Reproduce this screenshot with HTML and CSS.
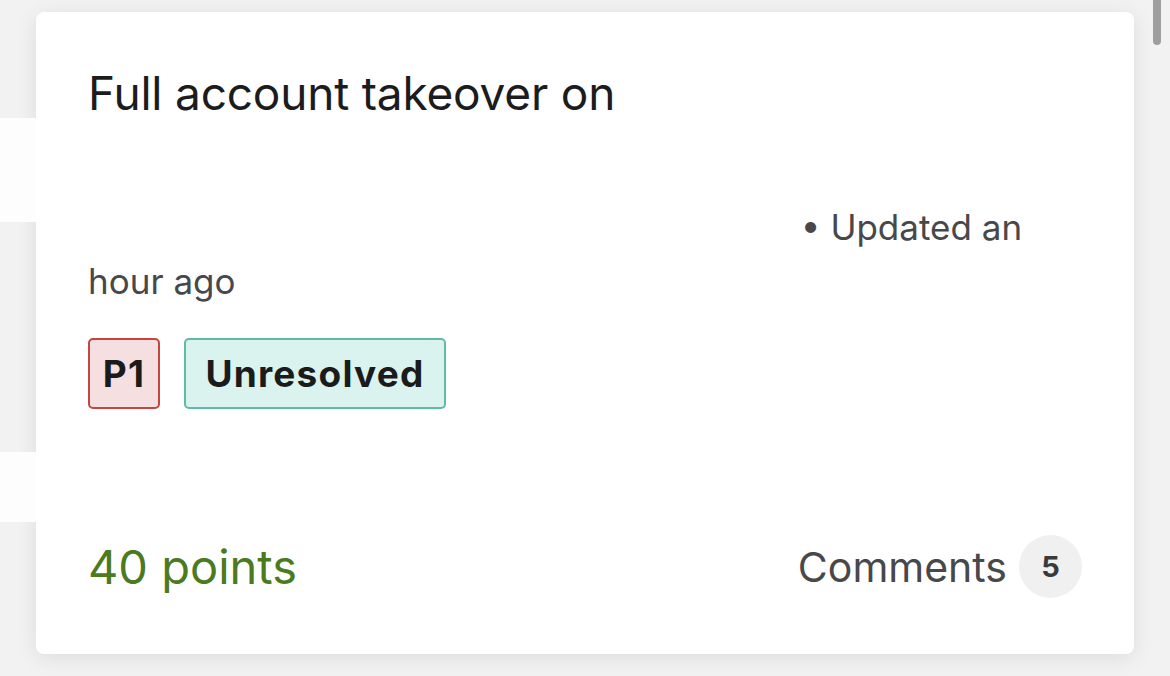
FILE: index.html
```html
<!DOCTYPE html>
<html lang="en">
<head>
<meta charset="utf-8">
<title>Report card</title>
<link rel="stylesheet" href="styles.css">
</head>
<body>
<div class="page">
  <div class="redact redact-a"></div>
  <div class="redact redact-b"></div>
  <article class="card">
    <div class="body">
      <h1 class="title">Full account takeover on<span class="hidden-line"></span></h1>
      <p class="meta"><span class="masked"></span> • Updated an hour ago</p>
      <div class="tags">
        <span class="tag tag-p1">P1</span>
        <span class="tag tag-state">Unresolved</span>
      </div>
    </div>
    <footer class="foot">
      <span class="points">40 points</span>
      <span class="comments">Comments <span class="count">5</span></span>
    </footer>
  </article>
  <div class="scrollbar"></div>
</div>
</body>
</html>
```

FILE: styles.css
```css
* { box-sizing: border-box; }
html, body { margin: 0; padding: 0; }
body {
  background: #f2f2f2;
  font-family: Inter, "Noto Sans", "Liberation Sans", sans-serif;
  width: 1170px;
  height: 676px;
  overflow: hidden;
}
.page {
  position: relative;
  padding: 12px 36px 0 36px;
  height: 676px;
}
.card {
  background: #fff;
  border-radius: 8px;
  height: 642px;
  box-shadow: 0 4px 22px rgba(0, 0, 0, 0.09);
  padding: 48px 52px 56px 52px;
  display: flex;
  flex-direction: column;
  justify-content: space-between;
}
.title {
  margin: 0;
  font-size: 46px;
  font-weight: 400;
  line-height: 66px;
  color: #1c1c1e;
  letter-spacing: -0.2px;
}
.hidden-line {
  display: block;
  height: 62px;
}
.meta {
  margin: 12px 0 0 0;
  font-size: 35px;
  line-height: 54px;
  color: #48484a;
}
.masked {
  display: inline-block;
  width: 703px;
  height: 10px;
}
.tags {
  display: flex;
  gap: 24px;
  margin-top: 30px;
}
.tag {
  display: inline-flex;
  align-items: center;
  justify-content: center;
  height: 71px;
  border: 2px solid;
  border-radius: 5px;
  font-weight: 700;
  font-size: 37px;
  letter-spacing: 1.2px;
  color: #1b1b1b;
}
.tag-p1 {
  width: 72px;
  background: #f5dfe0;
  border-color: #c4463f;
}
.tag-state {
  width: 262px;
  background: #dbf3ef;
  border-color: #5ebca6;
}
.foot {
  display: flex;
  justify-content: space-between;
  align-items: center;
}
.points {
  font-size: 47px;
  color: #4b7a1f;
}
.comments {
  display: flex;
  align-items: center;
  gap: 12px;
  font-size: 41px;
  color: #48484a;
}
.count {
  width: 63px;
  height: 63px;
  border-radius: 50%;
  background: #f0f0f0;
  display: inline-flex;
  align-items: center;
  justify-content: center;
  font-weight: 700;
  font-size: 29px;
  color: #3a3a3c;
}
.scrollbar {
  position: absolute;
  top: 0;
  right: 9px;
  width: 8px;
  height: 45px;
  border-radius: 0 0 4px 4px;
  background: #9e9e9e;
}
.redact {
  position: absolute;
  left: 0;
  width: 36px;
  background: #fdfdfd;
}
.redact-a { top: 118px; height: 104px; }
.redact-b { top: 452px; height: 70px; }
```
